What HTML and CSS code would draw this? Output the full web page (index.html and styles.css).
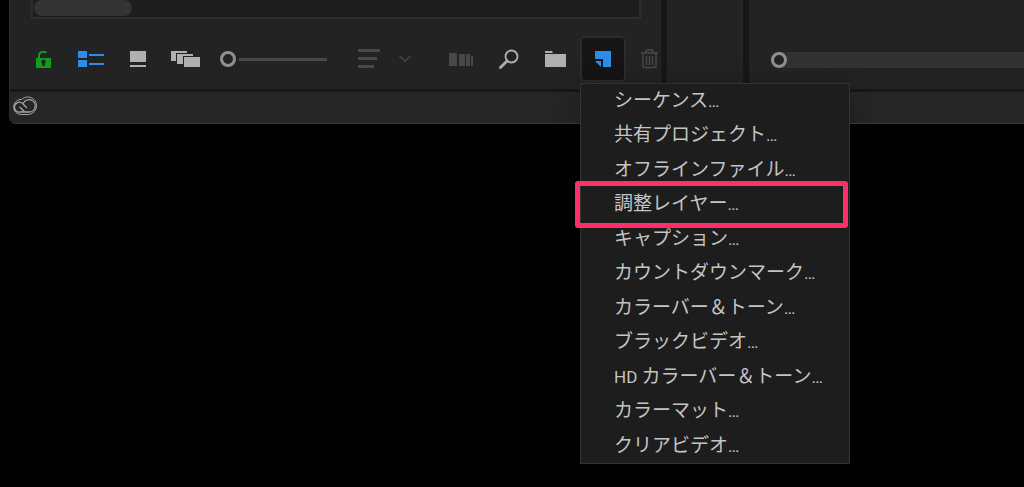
FILE: index.html
```html
<!DOCTYPE html>
<html lang="ja">
<head>
<meta charset="utf-8">
<meta name="viewport" content="width=device-width, initial-scale=1">
<title>プロジェクト</title>
<link rel="stylesheet" href="styles.css">
</head>
<body>
<main class="window">
  <div class="panels">
    <section class="panel project">
      <div class="list"><div class="scroll-thumb"></div></div>
      <div class="toolbar">
        <button class="tool" aria-label="ロック解除"><svg width="16" height="18" viewBox="0 0 16 18"><path fill="#169a18" fill-rule="evenodd" d="M0 8h15v10H0zM7.500 9.500a2.200 2.200 0 0 0-1.300 4V16h2.600v-2.500a2.200 2.200 0 0 0-1.300-4z"/><path d="M3 9V6Q3 2 7 2h1.500q1.500 0 2 .8" fill="none" stroke="#169a18" stroke-width="2"/></svg></button>
        <button class="tool" aria-label="リスト表示"><svg width="26" height="16" viewBox="0 0 26 16" fill="#2d8ceb"><path d="M0 0h9v7H0zM0 9h9v7H0zM11 3h15v2H11zM11 12h15v2H11z"/></svg></button>
        <button class="tool" aria-label="アイコン表示"><svg width="16" height="16" viewBox="0 0 16 16" fill="#b0b0b0"><path d="M0 0h16v11H0zM0 14h16v2H0z"/></svg></button>
        <button class="tool" aria-label="フリーフォーム表示"><svg width="29" height="16" viewBox="0 0 29 16" fill="#b0b0b0"><path d="M0 0h16v2H5v8H0zM6 3h16v2H12v8H6zM13 6h16v10H13z"/></svg></button>
        <input class="zoom" type="range" min="0" max="100" value="0" aria-label="サイズ">
        <button class="tool" aria-label="並べ替え"><svg width="22" height="20" viewBox="0 0 22 20" fill="#484848"><path d="M0 0h22v3H0zM0 8h19v3H0zM0 16h16v3H0z"/></svg></button>
        <button class="tool" aria-label="並べ替えメニュー"><svg width="12" height="8" viewBox="0 0 12 8" fill="none" stroke="#484848" stroke-width="1.500"><path d="M.5 1l5.500 5 5.500-5"/></svg></button>
        <button class="tool" aria-label="シーケンスへオート編集"><svg width="24" height="14" viewBox="0 0 24 14" fill="#484848"><path d="M0 1h8v13H0zM10 2h6v12h-6zM17 2h4v12h-4zM22 4h2v10h-2z"/></svg></button>
        <button class="tool" aria-label="検索"><svg width="20" height="20" viewBox="0 0 20 20" fill="none" stroke="#b0b0b0"><circle cx="12.500" cy="7.500" r="6" stroke-width="1.800"/><path d="M8 12l-6.500 6.500" stroke-width="2.800" stroke-linecap="round"/></svg></button>
        <button class="tool" aria-label="新規ビン"><svg width="21" height="17" viewBox="0 0 21 17" fill="#b0b0b0"><path d="M0 0h7l1 2H0zM0 3h21v13H0z"/></svg></button>
        <div class="new-item">
          <button class="tool new-button" aria-label="新規項目" aria-expanded="true"><svg width="16" height="16" viewBox="0 0 16 16" fill="#2d8ceb"><path d="M0 0h16v16H8V8H0zM0 10h6v6z"/></svg></button>
          <ul class="menu">
            <li><button>シーケンス<span class="latin">…</span></button></li>
            <li><button>共有プロジェクト<span class="latin">…</span></button></li>
            <li><button>オフラインファイル<span class="latin">…</span></button></li>
            <li class="marked"><button>調整レイヤー<span class="latin">…</span></button></li>
            <li><button>キャプション<span class="latin">…</span></button></li>
            <li><button>カウントダウンマーク<span class="latin">…</span></button></li>
            <li><button>カラーバー＆トーン<span class="latin">…</span></button></li>
            <li><button>ブラックビデオ<span class="latin">…</span></button></li>
            <li><button><span class="latin">HD </span>カラーバー＆トーン<span class="latin">…</span></button></li>
            <li><button>カラーマット<span class="latin">…</span></button></li>
            <li><button>クリアビデオ<span class="latin">…</span></button></li>
          </ul>
        </div>
        <button class="tool" aria-label="消去"><svg width="17" height="20" viewBox="0 0 17 20" fill="none" stroke="#4a4a4a" stroke-width="1.400"><path d="M0 4h17M5 4V2.500Q5 1 6.500 1h4Q12 1 12 2.500V4M2 4v13.500q0 1 1 1h11q1 0 1-1V4M5.500 7v9M8.500 7v9M11.500 7v9"/></svg></button>
      </div>
    </section>
    <section class="panel tools"></section>
    <section class="panel timeline">
      <input class="scrollbar" type="range" min="0" max="100" value="0" aria-label="タイムラインのズーム">
    </section>
  </div>
  <footer class="status">
    <svg width="26" height="21" viewBox="0 0 26 21" fill="none" stroke="#a4a4a4" stroke-linecap="round"><path stroke-width="1" d="M8.500 19.500A7.500 7.500 0 0 1 8 4.600Q9.500 4.600 10.200 4A8.800 8.800 0 1 1 17 19.500z"/><path stroke-width="1.300" d="M14.500 12.500l-3-3a4.900 4.900 0 1 0-3 7.500H17a6.200 6.200 0 1 0-5.500-9M8 12.200l4.500 4.500"/></svg>
  </footer>
</main>
</body>
</html>
```
FILE: styles.css
```css
* { box-sizing: border-box; }
body {
  margin: 0;
  min-height: 100vh;
  background: #000;
  font-family: Roboto, "Noto Sans CJK JP", sans-serif;
  font-size: 19px;
  color: #c4c4c4;
}
button {
  margin: 0;
  padding: 0;
  border: 0;
  background: none;
  color: inherit;
  font: inherit;
  text-align: left;
}
svg { display: block; }
.window {
  margin-left: 9px;
  background: #171717;
  border-left: 1px solid #2c2c2c;
  border-bottom: 1px solid #3c3c3c;
  border-bottom-left-radius: 7px;
}
.panels {
  display: grid;
  grid-template-columns: 651px 76px 1fr;
  gap: 6px;
}
.panel { background: #232323; }
.list {
  height: 19px;
  margin: 0 20px 0 21px;
  padding: 0 1px;
  background: #1d1d1d;
  border: 2px solid #2e2e2e;
  border-top: 0;
}
.scroll-thumb {
  width: 98px;
  height: 16px;
  border-radius: 8px;
  background: #333;
}
.toolbar {
  display: grid;
  grid-template-columns: 42px 52px 41px 49px 138px 41px 50px 50px 46px 35px 61px 20px;
  align-items: center;
  align-content: start;
  height: 70px;
  padding: 11px 0 0 26px;
}
.zoom, .scrollbar {
  appearance: none;
  margin: 0;
  height: 16px;
}
.zoom {
  width: 107px;
  background: linear-gradient(#484848, #484848) center / 100% 3px no-repeat;
}
.zoom::-webkit-slider-thumb, .scrollbar::-webkit-slider-thumb {
  appearance: none;
  width: 16px;
  height: 16px;
  border: 3px solid #909090;
  border-radius: 50%;
  background: #232323;
}
.zoom::-webkit-slider-thumb { box-shadow: 0 0 0 3px #232323; }
.new-item {
  position: relative;
  width: 46px;
  margin: 6px 0;
}
.new-button {
  display: grid;
  place-items: center;
  width: 46px;
  height: 46px;
  border: 2px solid #2c2c2c;
  border-radius: 5px;
  background: #151515;
}
.menu {
  position: absolute;
  z-index: 1;
  top: 47px;
  left: 0;
  width: 270px;
  margin: 0;
  padding: 0;
  list-style: none;
  background: #1d1d1d;
  border: 1px solid #343434;
  box-shadow: 0 4px 24px rgba(0, 0, 0, 0.3);
}
.menu li { position: relative; }
.menu button {
  display: block;
  width: 100%;
  padding-left: 33px;
  line-height: 34px;
  white-space: nowrap;
}
.menu li:nth-child(even) { padding-bottom: 1px; }
.latin { font-size: 17px; }
.marked::after {
  content: "";
  position: absolute;
  inset: -6px 1px -6px -6px;
  border: 5px solid #ff2f6c;
  border-radius: 3px;
  pointer-events: none;
}
.timeline { padding: 52px 0 0 22px; }
.scrollbar {
  display: block;
  width: 100%;
  background: linear-gradient(90deg, #232323 8px, #323232 8px);
}
.status {
  display: flex;
  align-items: center;
  height: 31px;
  margin-top: 3px;
  padding: 0 0 4px 2px;
  background: #262626;
  border-bottom-left-radius: 6px;
}
```
